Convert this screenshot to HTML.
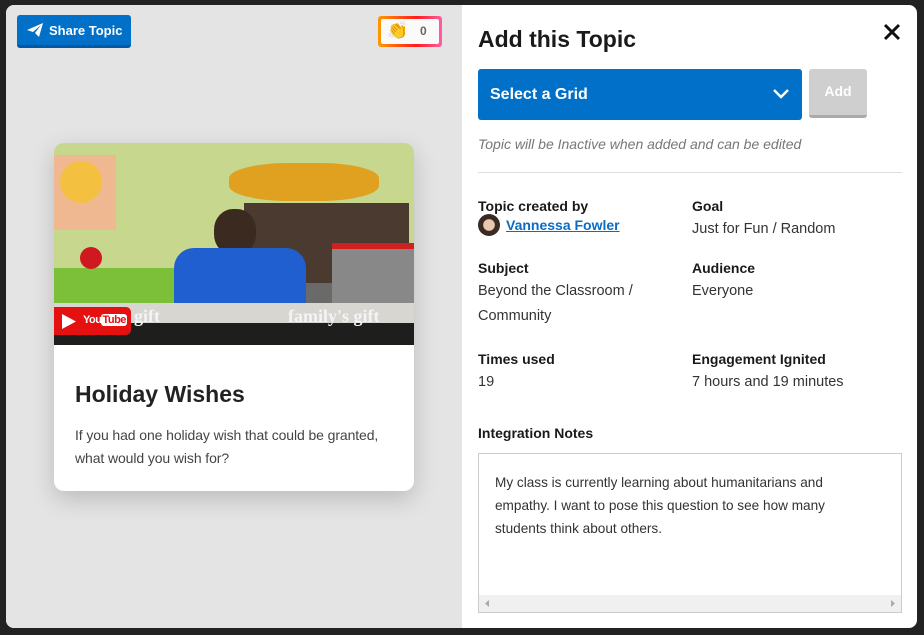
<!DOCTYPE html>
<html><head><meta charset="utf-8"><style>
*{box-sizing:border-box;margin:0;padding:0}
body{width:924px;height:635px;background:#222;font-family:"Liberation Sans",sans-serif;position:relative;overflow:hidden}
.modal{position:absolute;left:6px;top:5px;width:911px;height:623px;border-radius:8px;overflow:hidden;background:#fff}
.left{position:absolute;left:0;top:0;width:456px;height:623px;background:#e4e4e4}
.a{position:absolute}
.share{left:11px;top:10px;width:114px;height:33px;background:#0070c9;border-bottom:3px solid #005aa3;border-radius:3px;color:#fff;font-weight:bold;font-size:13px;line-height:31px;padding-left:32px}
.clap{left:372px;top:11px;width:64px;height:31px;border-radius:3px;background:linear-gradient(90deg,#ff9a00,#ff1a1a 60%,#ff5fa0);padding:3px}
.clap div{background:#fafafa;width:100%;height:100%;border-radius:2px;position:relative}
.card{left:48px;top:138px;width:360px;height:348px;background:#fff;border-radius:10px;overflow:hidden;box-shadow:0 8px 24px rgba(0,0,0,.18)}
.img{position:absolute;left:0;top:0;width:360px;height:202px;background:#c9d98f;overflow:hidden}
h2{font-size:23px;color:#222}
.lab{font-size:14px;font-weight:bold;color:#1a1a1a}
.val{font-size:14.5px;color:#333;line-height:25px}
</style></head><body>
<div class="modal">
<div class="left">
 <div class="a share"><svg class="a" style="left:10px;top:8px" width="16" height="15" viewBox="0 0 16 15"><path d="M0 7 L16 0 L12 14 L8 10 L14 2 L6 9 Z" fill="#fff"/></svg>Share Topic</div>
 <div class="a clap"><div><span class="a" style="left:6px;top:2px;font-size:17px;color:#f3b234">👏</span><span class="a" style="left:39px;top:5px;font-size:12px;font-weight:bold;color:#666">0</span></div></div>
 <div class="a card">
  <div class="img">
   <div class="a" style="left:0;top:0;width:360px;height:130px;background:#c7d88e"></div>
   <div class="a" style="left:0;top:12px;width:62px;height:75px;background:#f0b890"></div>
   <div class="a" style="left:6px;top:18px;width:42px;height:42px;border-radius:50%;background:#f4c040"></div>
   <div class="a" style="left:175px;top:20px;width:150px;height:38px;border-radius:40%;background:#e0a020"></div>
   <div class="a" style="left:0;top:128px;width:360px;height:40px;background:#6a6a68"></div>
   <div class="a" style="left:190px;top:60px;width:165px;height:80px;background:#4a3a30"></div>
   <div class="a" style="left:0;top:125px;width:125px;height:40px;background:#7cc03a"></div>
   <div class="a" style="left:26px;top:104px;width:22px;height:22px;border-radius:50%;background:#d01820"></div>
   <div class="a" style="left:278px;top:100px;width:82px;height:70px;background:#888;border-top:6px solid #d02020"></div>
   <div class="a" style="left:160px;top:66px;width:42px;height:46px;border-radius:45%;background:#3a2a20"></div>
   <div class="a" style="left:120px;top:105px;width:132px;height:62px;border-radius:20px 20px 0 0;background:#1f5fd0"></div>
   <div class="a" style="left:0;top:160px;width:360px;height:20px;background:#d8d6d0"></div>
   <div class="a" style="left:0;top:180px;width:360px;height:22px;background:#1e1e1c"></div>
   <div class="a" style="left:234px;top:163px;font-family:'Liberation Serif',serif;font-weight:bold;font-size:18px;color:#f4f4f4">family's gift</div>
   <div class="a" style="left:80px;top:163px;font-family:'Liberation Serif',serif;font-weight:bold;font-size:18px;color:#f4f4f4">gift</div>
   <div class="a" style="left:0;top:164px;width:77px;height:28px;background:#e51010;border-radius:0 5px 5px 0"></div>
   <svg class="a" style="left:8px;top:171px" width="14" height="15"><path d="M0 0 L14 7.5 L0 15Z" fill="#fff"/></svg>
   <div class="a" style="left:29px;top:171px;font-size:11px;font-weight:bold;color:#fff;letter-spacing:-0.5px">You<span style="background:#fff;color:#e51010;border-radius:3px;padding:0 1px">Tube</span></div>
  </div>
  <h2 class="a" style="left:21px;top:238px">Holiday Wishes</h2>
  <div class="a" style="left:21px;top:281px;font-size:14px;color:#444;line-height:23px;letter-spacing:-0.1px">If you had one holiday wish that could be granted,<br>what would you wish for?</div>
 </div>
</div>
<div class="a" style="left:472px;top:21px;font-size:23px;font-weight:bold;color:#1a1a1a">Add this Topic</div>
<svg class="a" style="left:877px;top:18px" width="18" height="18"><path d="M2 2L16 16M16 2L2 16" stroke="#111" stroke-width="3"/></svg>
<div class="a" style="left:472px;top:64px;width:324px;height:51px;background:#0070c9;border-radius:3px;color:#fff;font-weight:bold;font-size:16px;line-height:51px;padding-left:12px">Select a Grid
 <svg class="a" style="left:294px;top:19px" width="18" height="12"><path d="M2 2L9 9L16 2" stroke="#fff" stroke-width="2.5" fill="none"/></svg></div>
<div class="a" style="left:803px;top:64px;width:58px;height:49px;background:#cfcfcf;border-bottom:3px solid #aaa;border-radius:3px;color:#fff;font-weight:bold;font-size:14px;text-align:center;line-height:44px">Add</div>
<div class="a" style="left:472px;top:131px;font-size:14px;font-style:italic;color:#777">Topic will be Inactive when added and can be edited</div>
<div class="a" style="left:472px;top:167px;width:424px;height:1px;background:#ddd"></div>
<div class="a lab" style="left:472px;top:193px">Topic created by</div>
<div class="a" style="left:472px;top:209px;width:22px;height:22px;border-radius:50%;background:radial-gradient(circle at 50% 50%,#e8c8b0 35%,#3a2a22 40%)"></div>
<div class="a" style="left:500px;top:212px;font-size:14px;font-weight:bold;color:#0a6cc4;text-decoration:underline">Vannessa Fowler</div>
<div class="a lab" style="left:686px;top:193px">Goal</div>
<div class="a val" style="left:686px;top:212px">Just for Fun / Random</div>
<div class="a lab" style="left:472px;top:255px">Subject</div>
<div class="a val" style="left:472px;top:274px">Beyond the Classroom /<br>Community</div>
<div class="a lab" style="left:686px;top:255px">Audience</div>
<div class="a val" style="left:686px;top:274px">Everyone</div>
<div class="a lab" style="left:472px;top:346px">Times used</div>
<div class="a val" style="left:472px;top:365px">19</div>
<div class="a lab" style="left:686px;top:346px">Engagement Ignited</div>
<div class="a val" style="left:686px;top:365px">7 hours and 19 minutes</div>
<div class="a lab" style="left:472px;top:420px">Integration Notes</div>
<div class="a" style="left:472px;top:448px;width:424px;height:160px;border:1px solid #ccc">
 <div class="a" style="left:16px;top:17px;font-size:13.6px;color:#333;line-height:23px">My class is currently learning about humanitarians and<br>empathy. I want to pose this question to see how many<br>students think about others.</div>
 <div class="a" style="left:0;bottom:0;width:422px;height:17px;background:#f0f0f0"></div>
 <svg class="a" style="left:6px;bottom:5px" width="4" height="7"><path d="M4 0L0 3.5L4 7Z" fill="#aaa"/></svg>
 <svg class="a" style="right:6px;bottom:5px" width="4" height="7"><path d="M0 0L4 3.5L0 7Z" fill="#aaa"/></svg>
</div>
</div>
</body></html>
